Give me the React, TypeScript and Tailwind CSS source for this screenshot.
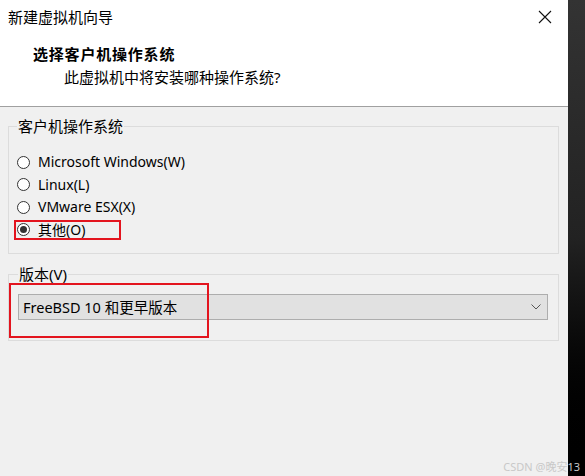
import React, { useState } from 'react';

const font = { fontFamily: '"Noto Sans", "Noto Sans CJK SC", sans-serif' };

const options = [
  { id: 'win', label: 'Microsoft Windows(W)' },
  { id: 'linux', label: 'Linux(L)' },
  { id: 'esx', label: 'VMware ESX(X)' },
  { id: 'other', label: '其他(O)' },
];

const Radio: React.FC<{ checked: boolean }> = ({ checked }) => (
  <span className="flex h-[13px] w-[13px] shrink-0 items-center justify-center rounded-full border border-[#333] bg-white">
    {checked && <span className="h-[7px] w-[7px] rounded-full bg-[#333]" />}
  </span>
);

const App: React.FC = () => {
  const [os, setOs] = useState('other');

  return (
    <div className="relative flex h-[476px] w-[585px] overflow-hidden bg-[#f0f0f0] text-[15px] text-black" style={font}>
      <div className="flex w-[568px] flex-col">
        {/* Header */}
        <div className="h-[107px] border-b border-[#a0a0a0] bg-white">
          <div className="flex h-[34px] items-center justify-between pl-[8px] pr-[15px]">
            <span className="leading-none">新建虚拟机向导</span>
            <svg width="14" height="14" viewBox="0 0 14 14" className="mr-[1px]">
              <path d="M1 1 L13 13 M13 1 L1 13" stroke="#111" strokeWidth="1.1" />
            </svg>
          </div>
          <div className="pl-[33px] pt-[9px]">
            <div className="font-bold leading-[22px] tracking-[0.8px]">选择客户机操作系统</div>
            <div className="pl-[31px] leading-[24px]">此虚拟机中将安装哪种操作系统?</div>
          </div>
        </div>

        {/* Guest OS group */}
        <fieldset className="ml-[8px] mt-[9px] w-[551px] border border-[#dcdcdc] pb-[12px] pl-[8px]">
          <legend className="px-[1px] leading-[20px]">客户机操作系统</legend>
          <div className="mt-[15px] flex flex-col">
            {options.map((o) => (
              <label key={o.id} className="relative flex h-[22.5px] cursor-default items-center gap-[8px]" onClick={() => setOs(o.id)}>
                <Radio checked={os === o.id} />
                <span className="text-[14px] leading-none">{o.label}</span>
                {o.id === 'other' && (
                  <span className="pointer-events-none absolute left-[-3px] top-[1px] h-[20px] w-[107px] border-2 border-[#e3141e]" />
                )}
              </label>
            ))}
          </div>
        </fieldset>

        {/* Version group */}
        <fieldset className="relative ml-[8px] mt-[10px] w-[551px] border border-[#dcdcdc] pb-[20px] pl-[9px] pr-[10px]">
          <legend className="px-[1px] leading-[20px]">版本(V)</legend>
          <div className="mt-[10px] flex h-[26px] items-center justify-between border border-[#adadad] bg-[#e1e1e1] pl-[4px] pr-[6px]">
            <span className="text-[14.5px] leading-none">FreeBSD 10 和更早版本</span>
            <svg width="10" height="6" viewBox="0 0 10 6">
              <path d="M0.5 0.5 L5 5 L9.5 0.5" stroke="#555" strokeWidth="1" fill="none" />
            </svg>
          </div>
          <span className="pointer-events-none absolute left-[0px] top-[-1px] h-[55px] w-[200px] border-2 border-[#e3141e]" />
        </fieldset>
      </div>

      {/* Right dark strip */}
      <div className="w-[17px] bg-gradient-to-b from-[#333] via-[#222] to-[#000]" />

      <span className="absolute bottom-[4px] right-[5px] text-[11px] leading-none text-[#c8c8c8]">CSDN @晚安13</span>
    </div>
  );
};

export default App;
